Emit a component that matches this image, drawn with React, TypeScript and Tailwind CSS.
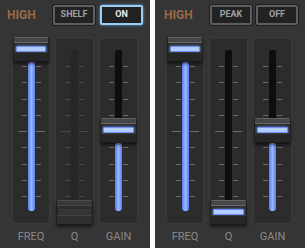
import React from "react";

type Fader = { label: string; top: number; disabled?: boolean; w: string };

const GROOVE_BOTTOM = 174; // in column coordinates
const KNOB_H = 25;

function Ticks({ side, disabled }: { side: "l" | "r"; disabled?: boolean }) {
  const c = disabled ? "bg-[#4a4a4a]" : "bg-[#6c6c6c]";
  return (
    <div
      className={`mt-[16px] h-[131px] w-[10px] flex flex-col justify-between ${
        side === "l" ? "items-end pr-[1px]" : "items-start pl-[1px]"
      }`}
    >
      {Array.from({ length: 9 }).map((_, i) => (
        <div key={i} className={`h-[1px] ${i === 4 ? "w-[9px]" : "w-[5px]"} ${c}`} />
      ))}
    </div>
  );
}

function Knob({ top, disabled }: { top: number; disabled?: boolean }) {
  return (
    <div
      className="absolute left-0 right-0 h-[25px] flex flex-col rounded-[2px] overflow-hidden border-x border-[#1f1f1f] shadow-[0_2px_3px_rgba(0,0,0,0.55)]"
      style={{ top }}
    >
      <div className={`h-[1px] ${disabled ? "bg-[#4e4e4e]" : "bg-[#626262]"}`} />
      <div className={`h-[4px] ${disabled ? "bg-[#393939]" : "bg-[#464646]"}`} />
      <div className={`h-[1px] ${disabled ? "bg-[#474747]" : "bg-[#6a6a6a]"}`} />
      <div className={`h-[3px] ${disabled ? "bg-[#2e2e2e]" : "bg-[#2a2a2a]"}`} />
      <div className={`h-[6px] px-[2px] ${disabled ? "bg-[#2e2e2e]" : "bg-[#2a2a2a]"}`}>
        {disabled ? (
          <div className="h-full bg-[#363636]" />
        ) : (
          <div className="h-full rounded-[1px] border border-[#6d8ff4] bg-[#b3ccff] shadow-[0_0_3px_#6f93ff]" />
        )}
      </div>
      <div className={`h-[1px] ${disabled ? "bg-[#444444]" : "bg-[#3c3c3c]"}`} />
      <div className={`flex-1 ${disabled ? "bg-[#2f2f2f]" : "bg-[#262626]"}`} />
      <div className="h-[1px] bg-[#1a1a1a]" />
    </div>
  );
}

function Column({ f }: { f: Fader }) {
  const fill = Math.max(0, GROOVE_BOTTOM - (f.top + KNOB_H));
  return (
    <div className={`${f.w} flex flex-col items-center`}>
      <div className="relative w-full h-[187px] rounded-[3px] bg-[#2c2c2c] border border-[#3b3b3b] shadow-[inset_0_1px_0_rgba(255,255,255,0.04)] flex justify-center items-start pt-[12px]">
        <Ticks side="l" disabled={f.disabled} />
        <div
          className={`w-[7px] h-[161px] rounded-[2px] flex flex-col justify-end overflow-hidden ${
            f.disabled ? "bg-[#262626]" : "bg-[#0e0e0e]"
          }`}
        >
          {fill > 0 && (
            <div
              className="w-full rounded-[2px] bg-linear-to-r from-[#5a7de8] via-[#98b6ff] to-[#5a7de8] shadow-[0_0_4px_rgba(110,150,255,0.6)]"
              style={{ height: fill }}
            />
          )}
        </div>
        <Ticks side="r" disabled={f.disabled} />
        <Knob top={f.top - 1} disabled={f.disabled} />
      </div>
      <div className="mt-[6px] text-[11px] leading-[13px] text-[#8a8a8a] font-['Roboto',sans-serif]">
        {f.label}
      </div>
    </div>
  );
}

function Button({ text, active }: { text: string; active?: boolean }) {
  return (
    <div
      className={`h-[20px] flex items-center justify-center rounded-[2px] border-2 bg-[#222222] text-[9px] font-bold font-['Roboto',sans-serif] ${
        active
          ? "w-[43px] border-[#9ccdf3] text-[#ececec] shadow-[0_0_3px_#5fa8e8]"
          : "w-[42px] border-[#5e5e5e] text-[#a0a0a0] shadow-[0_0_0_1px_#1e1e1e]"
      }`}
    >
      {text}
    </div>
  );
}

function Panel({
  b1,
  b2,
  active,
  qDisabled,
  right,
}: {
  b1: string;
  b2: string;
  active?: boolean;
  qDisabled?: boolean;
  right?: boolean;
}) {
  const faders: Fader[] = [
    { label: "FREQ", top: 0, w: "w-[38px]" },
    { label: "Q", top: 163, disabled: qDisabled, w: "w-[39px]" },
    { label: "GAIN", top: 81, w: "w-[39px]" },
  ];
  return (
    <div className="w-[150px] h-[248px] bg-[#353535] flex flex-col">
      <div className={`h-[30px] flex items-start ${right ? "pl-[9px]" : "pl-[7px]"}`}>
        <div className="w-[46px] mt-[8px] text-[12px] leading-[14px] font-bold text-[#9c6a46] font-['Roboto',sans-serif]">
          HIGH
        </div>
        <div className={`mt-[5px] flex ${right ? "gap-[4px]" : "gap-[5px]"}`}>
          <Button text={b1} />
          <Button text={b2} active={active} />
        </div>
      </div>
      <div className={`mt-[7px] flex ${right ? "pl-[11px] gap-[5px]" : "pl-[12px] gap-[5px]"}`}>
        {faders.map((f) => (
          <Column key={f.label} f={f} />
        ))}
      </div>
    </div>
  );
}

export default function App() {
  return (
    <div className="w-[305px] h-[248px] bg-white flex justify-between overflow-hidden">
      <Panel b1="SHELF" b2="ON" active qDisabled />
      <Panel b1="PEAK" b2="OFF" right />
    </div>
  );
}
